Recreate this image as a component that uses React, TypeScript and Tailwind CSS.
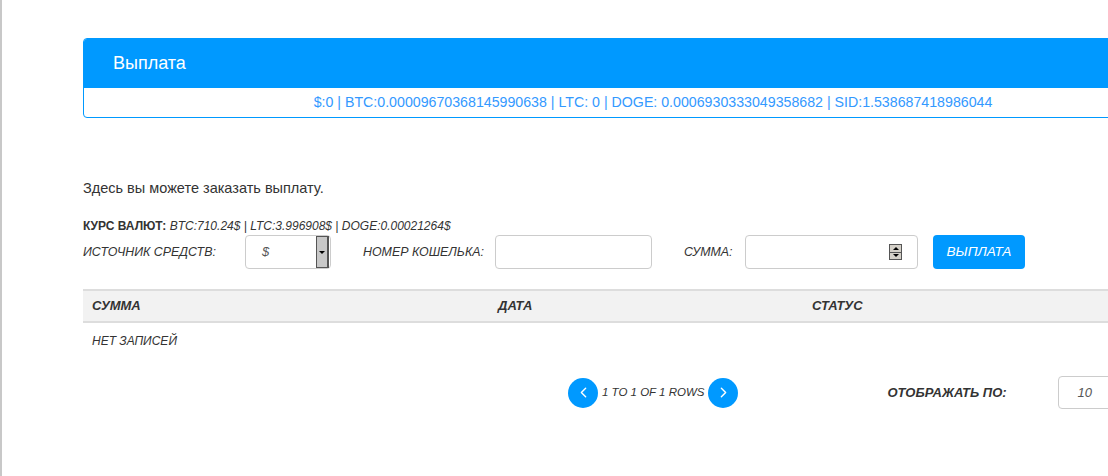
import { ChevronLeft, ChevronRight } from 'lucide-react'

const font = { fontFamily: '"Liberation Sans", Arial, sans-serif' }

function Spinner() {
  return (
    <div className="flex flex-col w-[13px] h-[16px] border border-[#555] bg-[#d4d0c8]">
      <div className="flex-1 flex items-center justify-center border-b border-[#555]">
        <div className="w-0 h-0 border-x-[3px] border-x-transparent border-b-[3px] border-b-black" />
      </div>
      <div className="flex-1 flex items-center justify-center">
        <div className="w-0 h-0 border-x-[3px] border-x-transparent border-t-[3px] border-t-black" />
      </div>
    </div>
  )
}

export default function App() {
  return (
    <div
      className="w-[1108px] h-[476px] overflow-hidden bg-white border-l-2 border-[#c8c8c8] pl-[81px] pt-[38px] text-[#333]"
      style={font}
    >
      <div className="w-[1140px]">
        {/* Payout card */}
        <div className="rounded-[4px] border border-[#0099ff] overflow-hidden">
          <div className="h-[49px] bg-[#0099ff] flex items-center pl-[29px]">
            <h1 className="text-[18px] text-white">Выплата</h1>
          </div>
          <div className="h-[29px] flex items-center justify-center text-[14.2px] text-[#3399ff]">
            $:0 | BTC:0.00009670368145990638 | LTC: 0 | DOGE: 0.0006930333049358682 | SID:1.538687418986044
          </div>
        </div>

        <p className="mt-[61px] text-[14.5px] leading-[18px]">Здесь вы можете заказать выплату.</p>

        <p className="mt-[22px] text-[12px] leading-[14px]">
          <span className="font-bold">КУРС ВАЛЮТ:</span>{' '}
          <span className="italic">BTC:710.24$ | LTC:3.996908$ | DOGE:0.00021264$</span>
        </p>

        {/* Form row */}
        <div className="mt-[2px] flex items-center h-[34px] text-[12.4px] italic">
          <span className="w-[162px]">ИСТОЧНИК СРЕДСТВ:</span>
          <div className="w-[86px] h-[34px] rounded-[4px] border border-[#ccc] flex items-center justify-between pl-[16px] pr-[1px]">
            <span className="text-[#555] text-[13px]">$</span>
            <div className="w-[13px] h-[32px] bg-[#c8c8c8] border border-[#555] border-r-2 flex items-center justify-center">
              <div className="w-0 h-0 border-x-[3px] border-x-transparent border-t-[3px] border-t-black" />
            </div>
          </div>
          <span className="ml-[32px] w-[132px]">НОМЕР КОШЕЛЬКА:</span>
          <div className="w-[157px] h-[34px] rounded-[4px] border border-[#ccc]" />
          <span className="ml-[32px] w-[61px]">СУММА:</span>
          <div className="w-[173px] h-[34px] rounded-[4px] border border-[#ccc] flex items-center justify-end pr-[15px]">
            <Spinner />
          </div>
          <button className="ml-[15px] w-[92px] h-[34px] rounded-[4px] bg-[#0099ff] text-white text-[13.6px] italic">
            ВЫПЛАТА
          </button>
        </div>

        {/* Table */}
        <div className="mt-[20px]">
          <div className="h-[34px] flex items-center bg-[#f2f2f2] border-y-2 border-[#dddddd] font-bold italic text-[13px]">
            <span className="w-[415px] pl-[9px]">СУММА</span>
            <span className="w-[314px]">ДАТА</span>
            <span>СТАТУС</span>
          </div>
          <div className="h-[35px] flex items-center pl-[9px] italic text-[12px]">НЕТ ЗАПИСЕЙ</div>
        </div>

        {/* Pagination */}
        <div className="mt-[18px] flex items-center h-[33px] italic">
          <div className="w-[485px]" />
          <button className="w-[30px] h-[30px] rounded-full bg-[#0099ff] text-white flex items-center justify-center">
            <ChevronLeft size={17} strokeWidth={2} />
          </button>
          <span className="px-[4px] text-[11.5px] text-[#333]">1 TO 1 OF 1 ROWS</span>
          <button className="w-[30px] h-[30px] rounded-full bg-[#0099ff] text-white flex items-center justify-center">
            <ChevronRight size={17} strokeWidth={2} />
          </button>
          <span className="ml-[149px] w-[171px] font-bold text-[13px]">ОТОБРАЖАТЬ ПО:</span>
          <div className="w-[80px] h-[33px] rounded-[4px] border border-[#ccc] flex items-center pl-[18px] text-[13px] text-[#555]">
            10
          </div>
        </div>
      </div>
    </div>
  )
}
